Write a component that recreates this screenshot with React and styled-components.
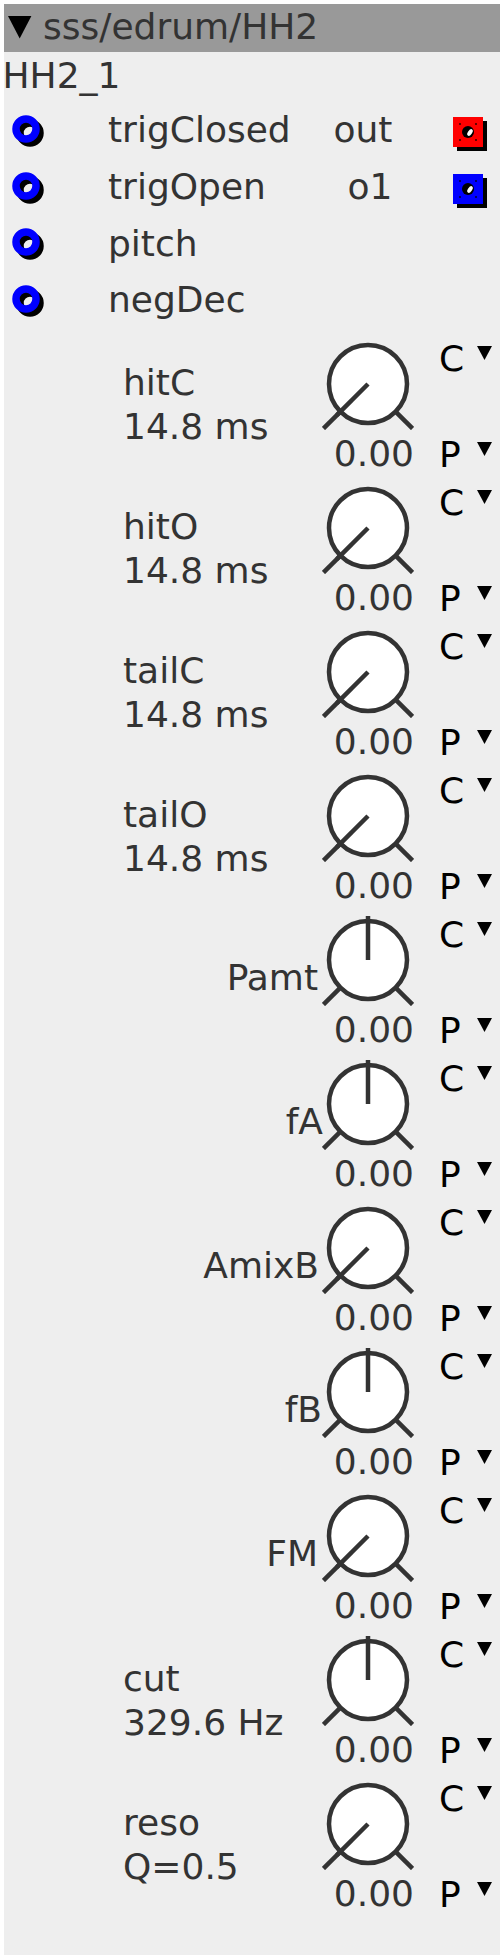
import React from 'react';
import styled, { createGlobalStyle } from 'styled-components';

const GlobalStyle = createGlobalStyle`
  body {
    margin: 0;
    background: #fff;
    font-family: 'DejaVu Sans', 'Liberation Sans', sans-serif;
  }
`;

const Panel = styled.div`
  box-sizing: border-box;
  margin: 4px 0 0 4px;
  width: 496px;
  height: 1951px;
  background: #eee;
  color: #333;
  font-size: 36px;
  line-height: 44px;
`;

const TitleBar = styled.div`
  box-sizing: border-box;
  height: 48px;
  padding: 1px 0 0 4.3px;
  background: #999;
  white-space: nowrap;
`;

const CollapseIcon = styled.svg`
  width: 23.4px;
  height: 22.6px;
  margin-right: 11.3px;
`;

const InstanceName = styled.div`
  margin: 1.5px 0 0 -1.5px;
`;

const PortList = styled.div`
  margin-top: 4.6px;
`;

const PortRow = styled.div`
  display: grid;
  grid-template-columns: 104px 1fr auto 107.5px;
  align-items: center;
  height: 56.67px;
`;

const InletCell = styled.div`
  align-self: start;
  padding: 13px 0 0 8px;
  svg { display: block; }
`;

const PortName = styled.div`
  white-space: nowrap;
  text-align: ${(p) => (p.$right ? 'right' : 'left')};
`;

const OutletCell = styled.div`
  align-self: start;
  padding: 14.8px 0 0 60.8px;
  svg { display: block; }
`;

const KnobList = styled.div`
  margin-top: 7.1px;
`;

const KnobRow = styled.div`
  display: grid;
  grid-template-columns: 318px 92px 1fr;
  height: 144px;
`;

const ParamLabel = styled.div`
  padding-top: ${(p) => (p.$inline ? 44.5 : 25.5)}px;
  padding-left: ${(p) => (p.$inline ? 0 : 119)}px;
  margin-right: ${(p) => (p.$inline ? 1 - (p.$shift || 0) : 0)}px;
  text-align: ${(p) => (p.$inline ? 'right' : 'left')};
  white-space: nowrap;
`;

const KnobCell = styled.div`
  display: flex;
  flex-direction: column;
  align-items: flex-end;
  padding-top: 2px;
  svg { display: block; }
`;

const KnobValue = styled.div`
  margin-top: 2.5px;
  white-space: nowrap;
`;

const ModCell = styled.div`
  padding: 1.5px 0 0 25px;
  color: #000;
`;

const ModLine = styled.div`
  display: flex;
  align-items: flex-start;
  margin-top: ${(p) => p.$gap || 0}px;
`;

const ModLetter = styled.span`
  width: 37.7px;
`;

const DropArrow = styled.svg`
  width: 15px;
  height: 14px;
  margin-top: 8.3px;
`;

const ports = [
  { inlet: 'trigClosed', outlet: 'out', color: '#ff0000' },
  { inlet: 'trigOpen', outlet: 'o1', color: '#0000ff' },
  { inlet: 'pitch' },
  { inlet: 'negDec' },
];

const knobs = [
  { name: 'hitC', value: '14.8 ms' },
  { name: 'hitO', value: '14.8 ms' },
  { name: 'tailC', value: '14.8 ms' },
  { name: 'tailO', value: '14.8 ms' },
  { name: 'Pamt', bipolar: true, shift: -3 },
  { name: 'fA', bipolar: true, shift: 2 },
  { name: 'AmixB', shift: -2 },
  { name: 'fB', bipolar: true, shift: 1 },
  { name: 'FM', shift: -3 },
  { name: 'cut', value: '329.6 Hz', bipolar: true },
  { name: 'reso', value: 'Q=0.5' },
];

const Inlet = () => (
  <svg width="36" height="36" viewBox="0 0 36 36">
    <circle cx="18" cy="18" r="10" fill="none" stroke="#000" strokeWidth="7.5" />
    <circle cx="14" cy="14" r="10" fill="none" stroke="#0000ff" strokeWidth="7.5" />
  </svg>
);

const Outlet = ({ color }) => (
  <svg width="34" height="34" viewBox="0 0 34 34">
    <rect x="4" y="4" width="30" height="30" fill="#000" />
    <rect x="0" y="0" width="30" height="30" fill={color} />
    <rect x="6" y="6" width="2" height="2" fill="#000" opacity="0.6" />
    <rect x="22" y="6" width="2" height="2" fill="#000" opacity="0.6" />
    <rect x="6" y="22" width="2" height="2" fill="#000" opacity="0.6" />
    <rect x="22" y="22" width="2" height="2" fill="#000" opacity="0.6" />
    <circle cx="15" cy="15" r="6" fill="#000" />
    <ellipse cx="17" cy="15.5" rx="2" ry="3.8" fill="#fff" transform="rotate(35 17 15.5)" />
  </svg>
);

const polar = (r, deg) => {
  const a = (deg * Math.PI) / 180;
  return [46 + r * Math.sin(a), 46 - r * Math.cos(a)];
};

const Knob = ({ bipolar }) => {
  const [l1x, l1y] = polar(39, -135);
  const [l2x, l2y] = polar(63, -135);
  const [r1x, r1y] = polar(39, 135);
  const [r2x, r2y] = polar(63, 135);
  const [ix, iy] = polar(44, bipolar ? 0 : -135);
  return (
    <svg width="92" height="92" viewBox="0 0 92 92">
      <g stroke="#333" strokeWidth="4.5">
        <line x1={l1x} y1={l1y} x2={l2x} y2={l2y} />
        <line x1={r1x} y1={r1y} x2={r2x} y2={r2y} />
        <circle cx="46" cy="46" r="39" fill="#fff" />
        <line x1="46" y1="46" x2={ix} y2={iy} />
      </g>
    </svg>
  );
};

const Arrow = () => (
  <DropArrow viewBox="0 0 15 14">
    <polygon points="0,0 15,0 7.5,14" fill="#000" />
  </DropArrow>
);

const App = () => (
  <>
    <GlobalStyle />
    <Panel>
      <TitleBar>
        <CollapseIcon viewBox="0 0 24 23">
          <polygon points="0,0 24,0 12,23" fill="#000" />
        </CollapseIcon>
        sss/edrum/HH2
      </TitleBar>
      <InstanceName>HH2_1</InstanceName>
      <PortList>
        {ports.map((p) => (
          <PortRow key={p.inlet}>
            <InletCell>
              <Inlet />
            </InletCell>
            <PortName>{p.inlet}</PortName>
            <PortName $right>{p.outlet}</PortName>
            <OutletCell>{p.outlet && <Outlet color={p.color} />}</OutletCell>
          </PortRow>
        ))}
      </PortList>
      <KnobList>
        {knobs.map((k) => (
          <KnobRow key={k.name}>
            <ParamLabel $inline={!k.value} $shift={k.shift}>
              <div>{k.name}</div>
              {k.value && <div>{k.value}</div>}
            </ParamLabel>
            <KnobCell>
              <Knob bipolar={k.bipolar} />
              <KnobValue>0.00</KnobValue>
            </KnobCell>
            <ModCell>
              <ModLine>
                <ModLetter>C</ModLetter>
                <Arrow />
              </ModLine>
              <ModLine $gap={52}>
                <ModLetter>P</ModLetter>
                <Arrow />
              </ModLine>
            </ModCell>
          </KnobRow>
        ))}
      </KnobList>
    </Panel>
  </>
);

export default App;
